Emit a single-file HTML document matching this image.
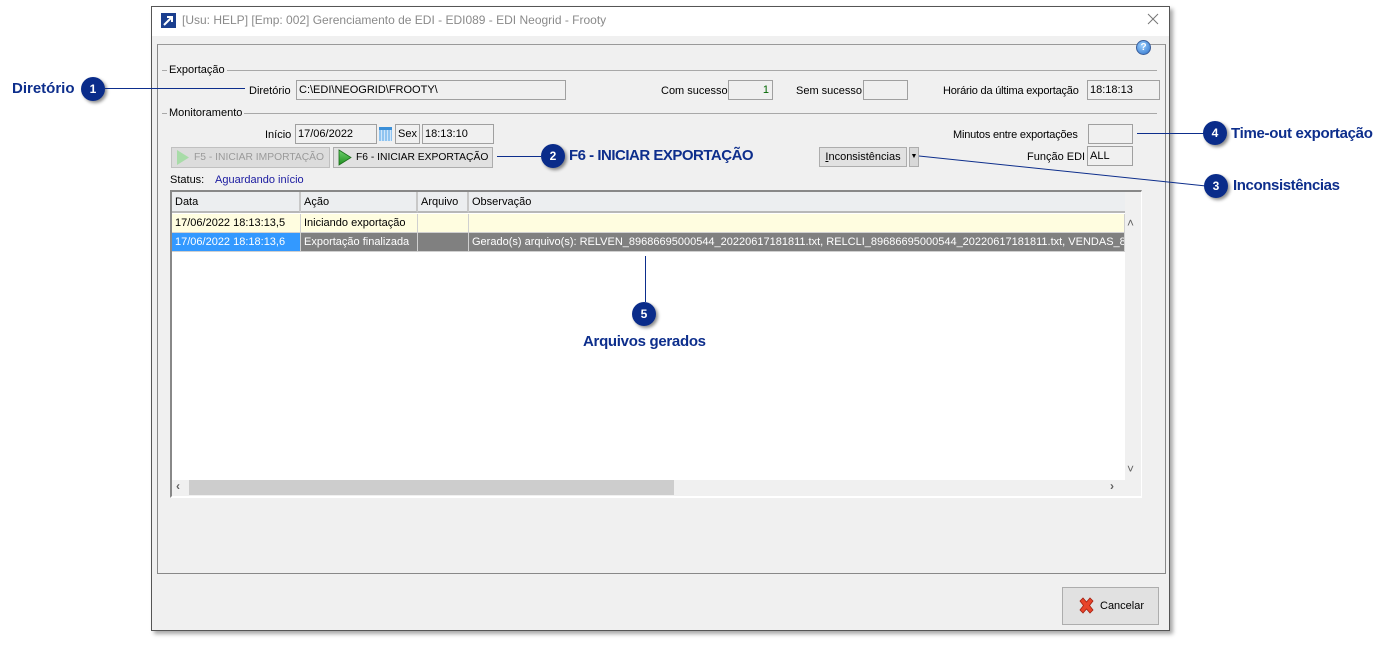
<!DOCTYPE html>
<html><head><meta charset="utf-8"><style>
*{margin:0;padding:0;box-sizing:border-box}
body{width:1394px;height:647px;background:#fff;position:relative;overflow:hidden;font-family:"Liberation Sans",sans-serif;font-size:11px;color:#000}
.a{position:absolute}
.lbl{position:absolute;font-size:11px;white-space:nowrap;line-height:13px}
.box{position:absolute;background:#f0f0f0;border:1px solid #a0a0a0;font-size:11px;line-height:18px;padding-left:2px;white-space:nowrap;overflow:hidden}
.call{position:absolute;color:#0d2e8c;font-weight:bold;font-size:15px;white-space:nowrap;line-height:18px}
.num{position:absolute;width:24px;height:24px;border-radius:50%;background:#0a2c8a;color:#fff;font-weight:bold;font-size:12px;text-align:center;line-height:24px;box-shadow:2px 2px 3px rgba(0,0,0,.45)}
.ln{position:absolute;background:#0d2e8c;height:1px}
.td{position:absolute;height:19px;line-height:18px;padding-left:3px;white-space:nowrap;overflow:hidden;border-right:1px solid #d0d0d0;border-bottom:1px solid #d0d0d0}
.th{position:absolute;top:0;height:21px;line-height:21px;padding-left:3px;background:#eceef0;border-right:2px solid #c8c8c8;border-bottom:2px solid #b8b8b8}
</style></head><body>
<div class="a" style="left:151px;top:6px;width:1019px;height:625px;background:#f0f0f0;border:1px solid #555;box-shadow:3px 3px 4px rgba(0,0,0,.35)"></div>
<div class="a" style="left:152px;top:7px;width:1017px;height:29px;background:#fff"></div>
<svg class="a" style="left:161px;top:13px" width="15" height="15"><rect width="15" height="15" fill="#1b3f8f"/><path d="M3 12 L11 4 M6 4 H11 V9" stroke="#fff" stroke-width="2" fill="none"/></svg>
<div class="lbl" style="left:182px;top:14px;font-size:12px;color:#8a8a8a">[Usu: HELP] [Emp: 002] Gerenciamento de EDI - EDI089 - EDI Neogrid - Frooty</div>
<svg class="a" style="left:1147px;top:13px" width="12" height="12"><path d="M1 1L11 11M11 1L1 11" stroke="#777" stroke-width="1"/></svg>
<div class="a" style="left:157px;top:44px;width:1009px;height:530px;border:1px solid #888;border-top-color:#999"></div>
<div class="a" style="left:1136px;top:40px;width:15px;height:15px;border-radius:50%;background:radial-gradient(circle at 40% 35%,#9cd0ff,#2a6fc9);border:1px solid #3a5e9a;color:#fff;font-size:10px;font-weight:bold;text-align:center;line-height:13px">?</div>
<div class="a" style="left:162px;top:70px;width:995px;height:1px;background:#a8a8a8"></div>
<div class="lbl" style="left:167px;top:64px;background:#f0f0f0;padding:0 2px">Exportação</div>
<div class="lbl" style="left:249px;top:85px">Diretório</div>
<div class="box" style="left:296px;top:80px;width:270px;height:20px">C:\EDI\NEOGRID\FROOTY\</div>
<div class="lbl" style="left:661px;top:85px">Com sucesso</div>
<div class="box" style="left:728px;top:80px;width:45px;height:20px;text-align:right;padding-right:3px;color:#060">1</div>
<div class="lbl" style="left:796px;top:85px">Sem sucesso</div>
<div class="box" style="left:863px;top:80px;width:45px;height:20px"></div>
<div class="lbl" style="left:943px;top:85px;letter-spacing:-0.2px">Horário da última exportação</div>
<div class="box" style="left:1087px;top:80px;width:73px;height:20px">18:18:13</div>
<div class="a" style="left:162px;top:113px;width:995px;height:1px;background:#a8a8a8"></div>
<div class="lbl" style="left:167px;top:107px;background:#f0f0f0;padding:0 2px">Monitoramento</div>
<div class="lbl" style="left:265px;top:129px">Início</div>
<div class="box" style="left:295px;top:124px;width:82px;height:20px">17/06/2022</div>
<div class="a" style="left:379px;top:127px;width:13px;height:14px;background:repeating-linear-gradient(90deg,#8fc4f0 0 2px,#cfe6fb 2px 3px);border-top:3px solid #3a8fd8"></div>
<div class="box" style="left:395px;top:124px;width:25px;height:20px">Sex</div>
<div class="box" style="left:422px;top:124px;width:72px;height:20px">18:13:10</div>
<div class="a" style="left:171px;top:147px;width:159px;height:21px;background:#dcdcdc;border:1px solid #c0c0c0;color:#9a9a9a;line-height:19px;padding-left:22px;white-space:nowrap;font-size:10.3px;overflow:hidden">F5 - INICIAR IMPORTAÇÃO</div>
<svg class="a" style="left:176px;top:149px" width="14" height="17"><path d="M1 1L13 8.5L1 16Z" fill="#a8dca8"/></svg>
<div class="a" style="left:333px;top:147px;width:160px;height:21px;background:#e1e1e1;border:1px solid #adadad;line-height:19px;padding-left:22px;white-space:nowrap;font-size:10.3px;overflow:hidden">F6 - INICIAR EXPORTAÇÃO</div>
<svg class="a" style="left:338px;top:149px" width="14" height="17"><defs><linearGradient id="g" x1="0" x2="0" y1="0" y2="1"><stop offset="0" stop-color="#6ed06e"/><stop offset="1" stop-color="#1f8f1f"/></linearGradient></defs><path d="M1 1L13 8.5L1 16Z" fill="url(#g)" stroke="#1a6d1a" stroke-width=".8"/></svg>
<div class="lbl" style="left:953px;top:129px;letter-spacing:-0.2px">Minutos entre exportações</div>
<div class="box" style="left:1088px;top:124px;width:45px;height:20px"></div>
<div class="a" style="left:819px;top:147px;width:88px;height:20px;background:#e1e1e1;border:1px solid #adadad;line-height:18px;text-align:center"><u>I</u>nconsistências</div>
<div class="a" style="left:909px;top:147px;width:10px;height:20px;background:#d8d8d8;border:1px solid #adadad;font-size:7px;line-height:18px;text-align:center">▼</div>
<div class="lbl" style="left:1027px;top:151px">Função EDI</div>
<div class="box" style="left:1087px;top:146px;width:46px;height:20px">ALL</div>
<div class="lbl" style="left:170px;top:174px">Status:</div>
<div class="lbl" style="left:215px;top:174px;color:#1a1aa0">Aguardando início</div>
<div class="a" style="left:170px;top:190px;width:972px;height:308px;background:#f0f0f0;border-left:2px solid #888;border-top:2px solid #888;border-right:1px solid #fff;border-bottom:2px solid #fff;overflow:hidden">
 <div class="a" style="left:0;top:0;width:953px;height:288px;background:#fff"></div>
 <div class="th" style="left:0;width:129px">Data</div>
 <div class="th" style="left:129px;width:117px">Ação</div>
 <div class="th" style="left:246px;width:51px">Arquivo</div>
 <div class="th" style="left:297px;width:656px;border-right:none">Observação</div>
 <div class="td" style="left:0;top:22px;width:129px;background:#fffde0">17/06/2022 18:13:13,5</div>
 <div class="td" style="left:129px;top:22px;width:117px;background:#fffde0">Iniciando exportação</div>
 <div class="td" style="left:246px;top:22px;width:51px;background:#fffde0"></div>
 <div class="td" style="left:297px;top:22px;width:656px;background:#fffde0"></div>
 <div class="td" style="left:0;top:41px;width:129px;background:#3399ff;color:#fff">17/06/2022 18:18:13,6</div>
 <div class="td" style="left:129px;top:41px;width:117px;background:#808080;color:#fff">Exportação finalizada</div>
 <div class="td" style="left:246px;top:41px;width:51px;background:#808080"></div>
 <div class="td" style="left:297px;top:41px;width:656px;background:#808080;color:#fff">Gerado(s) arquivo(s): RELVEN_89686695000544_20220617181811.txt, RELCLI_89686695000544_20220617181811.txt, VENDAS_89686695000544_20220617181811.txt</div>
 <div class="a" style="left:953px;top:22px;width:17px;height:266px;background:#f0f0f0"></div>
 <div class="a" style="left:955px;top:24px;color:#606060;font-size:12px">˄</div>
 <div class="a" style="left:955px;top:270px;color:#606060;font-size:12px">˅</div>
 <div class="a" style="left:17px;top:288px;width:485px;height:15px;background:#cdcdcd"></div>
 <div class="a" style="left:4px;top:287px;color:#606060;font-weight:bold;font-size:12px">‹</div>
 <div class="a" style="left:938px;top:287px;color:#606060;font-weight:bold;font-size:12px">›</div>
</div>
<div class="a" style="left:1062px;top:587px;width:97px;height:38px;background:#e1e1e1;border:1px solid #adadad;line-height:36px;padding-left:37px">Cancelar</div>
<svg class="a" style="left:1078px;top:597px" width="17" height="17"><path d="M2 4L5 1L8.5 5L12 1L15 4L11.5 8.5L15 13L12 16L8.5 12L5 16L2 13L5.5 8.5Z" fill="#e8442a" stroke="#a32010" stroke-width=".8"/></svg>
<div class="call" style="left:12px;top:80px">Diretório</div>
<div class="num" style="left:81px;top:77px">1</div>
<div class="ln" style="left:105px;top:88px;width:140px"></div>
<div class="ln" style="left:497px;top:156px;width:44px"></div>
<div class="num" style="left:541px;top:144px">2</div>
<div class="call" style="left:569px;top:147px;letter-spacing:-0.5px">F6 - INICIAR EXPORTAÇÃO</div>
<svg class="a" style="left:918px;top:150px" width="290" height="40"><path d="M1 6 L288 36" stroke="#0d2e8c" stroke-width="1"/></svg>
<div class="num" style="left:1204px;top:174px">3</div>
<div class="call" style="left:1233px;top:177px;letter-spacing:-0.4px">Inconsistências</div>
<div class="ln" style="left:1137px;top:133px;width:67px"></div>
<div class="num" style="left:1203px;top:121px">4</div>
<div class="call" style="left:1231px;top:125px;letter-spacing:-0.3px">Time-out exportação</div>
<div class="a" style="left:645px;top:256px;width:1px;height:46px;background:#0d2e8c"></div>
<div class="num" style="left:632px;top:302px">5</div>
<div class="call" style="left:583px;top:333px;letter-spacing:-0.3px">Arquivos gerados</div>
</body></html>
